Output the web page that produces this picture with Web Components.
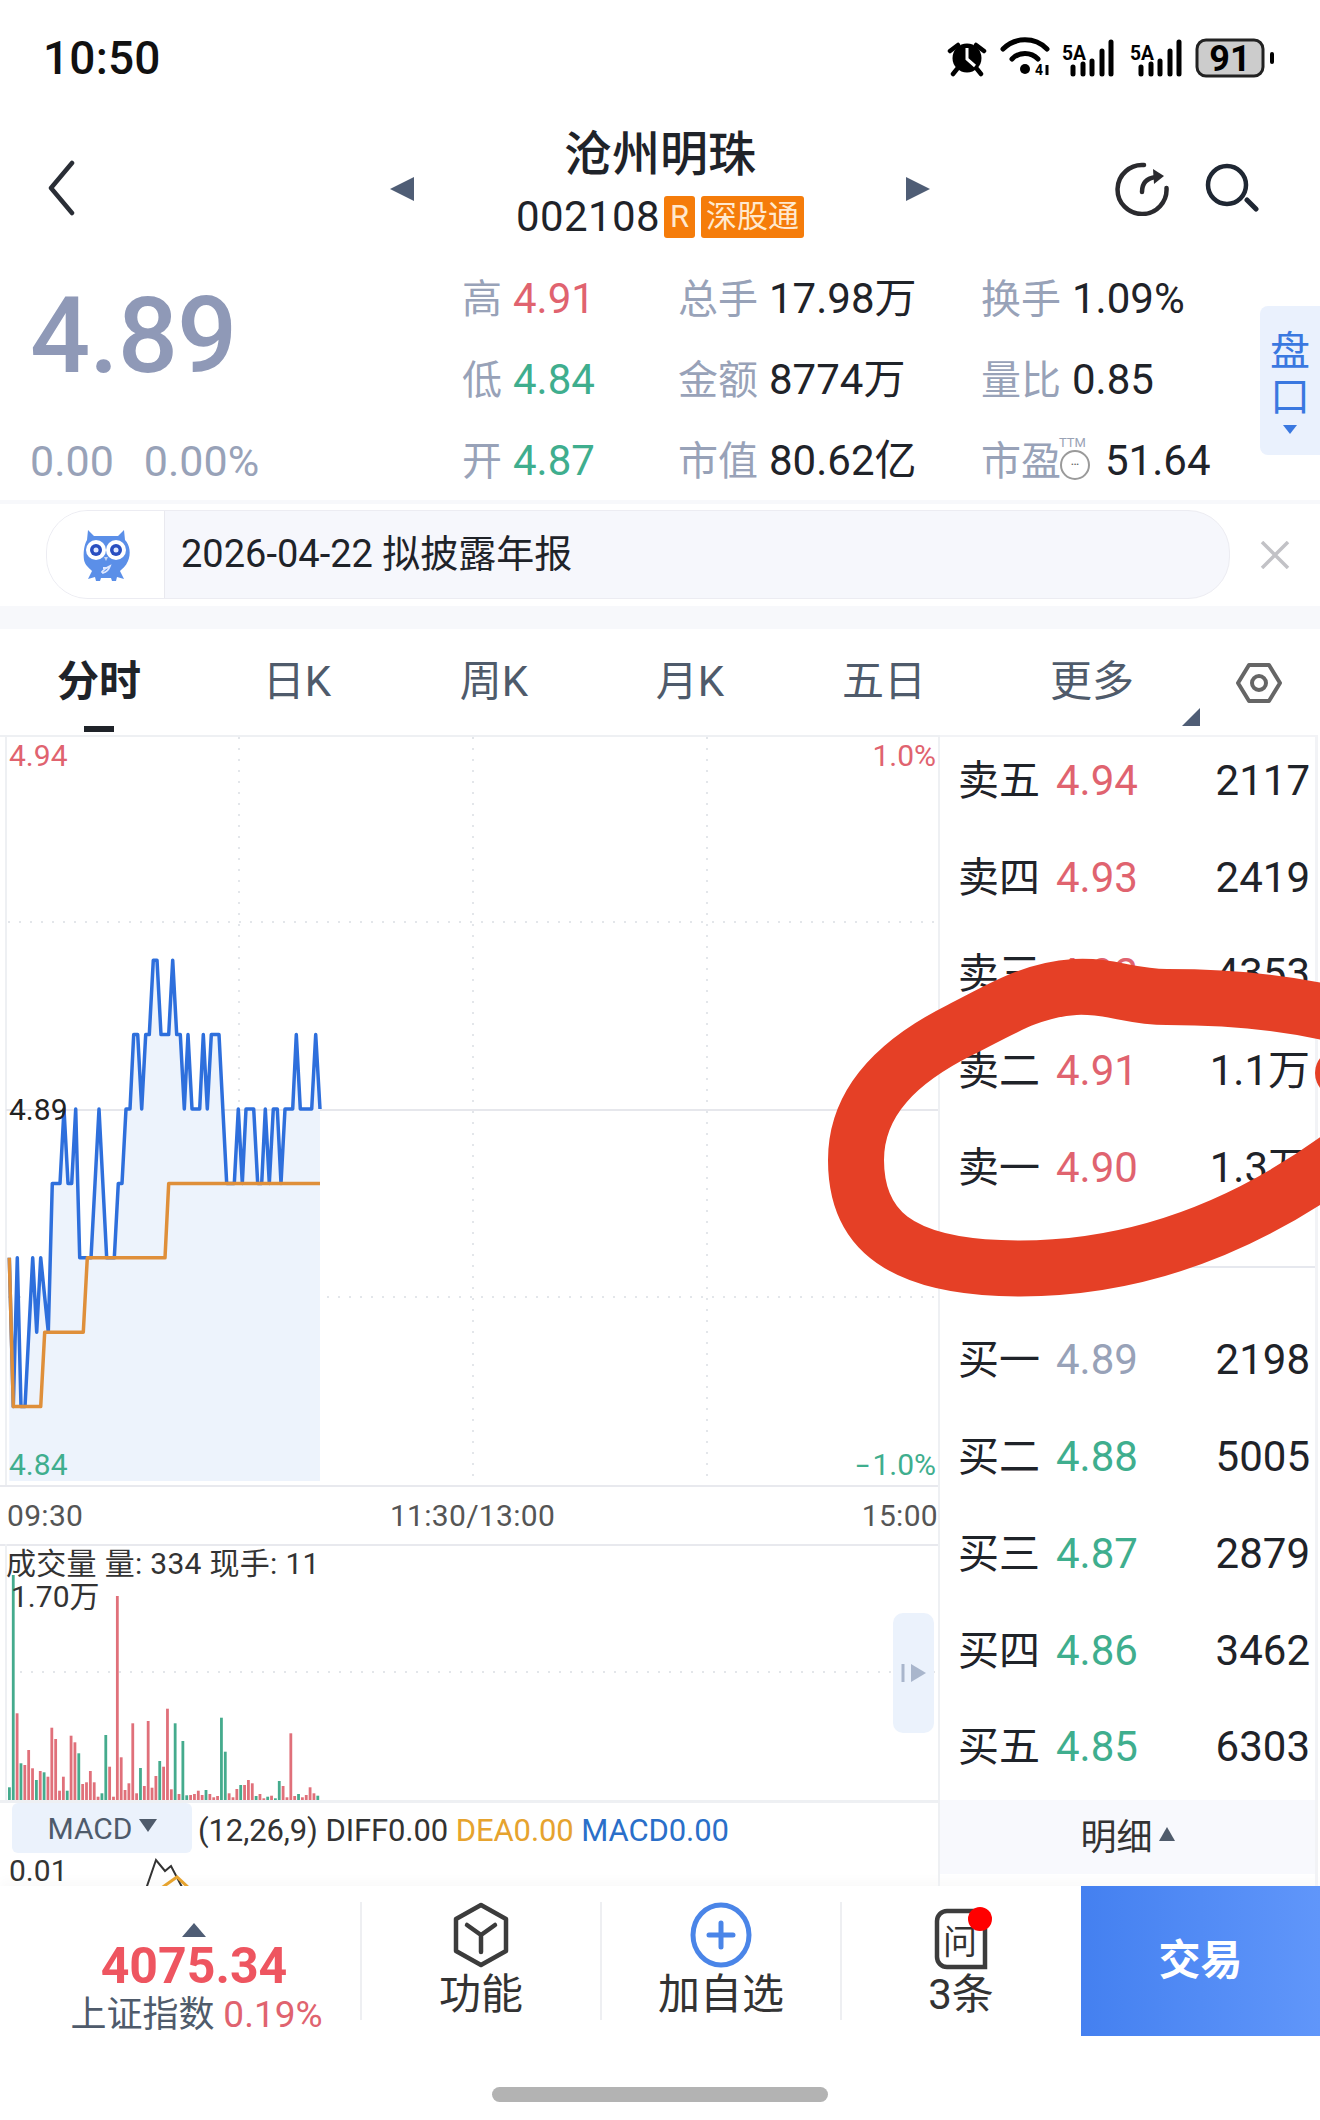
<!DOCTYPE html>
<html lang="zh">
<head>
<meta charset="utf-8">
<title>沧州明珠</title>
<style>
  html, body { margin: 0; padding: 0; background: #fff; }
  body {
    position: relative;
    width: 1320px;
    height: 2120px;
    overflow: hidden;
    color: #1f2329;
    font-family: Roboto, "Noto Sans CJK SC", sans-serif;
  }
  .band { display: block; background: #f7f8fb; }
  .trading { display: grid; grid-template-columns: 940px 380px; height: 1151px; }
</style>
</head>
<body>
<status-bar></status-bar>
<stock-header name="沧州明珠" code="002108"></stock-header>
<quote-panel price="4.89" change="0.00" percent="0.00%"></quote-panel>
<div class="band" style="height:4px"></div>
<notice-bar>2026-04-22 拟披露年报</notice-bar>
<div class="band" style="height:23px"></div>
<period-tabs></period-tabs>
<div class="trading">
  <market-chart></market-chart>
  <order-book></order-book>
</div>
<bottom-nav></bottom-nav>
<red-scribble></red-scribble>

<script>
// small base: every element clones its own template into an open shadow root
class Shell extends HTMLElement {
  constructor() {
    super();
    this.attachShadow({ mode: 'open' });
    const t = document.createElement('template');
    t.innerHTML = this.constructor.markup;
    this.shadowRoot.appendChild(t.content.cloneNode(true));
  }
  $(sel) { return this.shadowRoot.querySelector(sel); }
}

const signal = (x) => `
  <g transform="translate(${x} 0)">
    <text x="-1" y="21" font-size="21" font-weight="700" textLength="24" lengthAdjust="spacingAndGlyphs" font-family="Roboto, sans-serif">5A</text>
    <path d="M10 28v7M20 25v10M29 22v13M39 12v23M48 3v32" stroke="#000" stroke-width="5" stroke-linecap="round"/>
  </g>`;

class StatusBar extends Shell {
  static markup = `
  <style>
    :host { display: flex; height: 100px; justify-content: space-between; box-sizing: border-box; padding: 34px 44px 0 43px; }
    .time { font-size: 46px; line-height: 48px; color: #111; font-weight: 500; letter-spacing: .2px; }
    svg { display: block; margin-right: -1px; margin-top: 1px; }
  </style>
  <div class="time">10:50</div>
  <svg width="330" height="44" viewBox="0 0 330 44">
    <g transform="translate(-945 -36)">
      <circle cx="965" cy="59" r="14.5" fill="#000"/>
      <path d="M965 49v11l8 7" stroke="#fff" stroke-width="3" fill="none"/>
      <path d="M948 52l8-6M982 52l-8-6M955 70l-4 5M975 70l4 5" stroke="#000" stroke-width="4.5" stroke-linecap="round"/>
      <circle cx="1023" cy="70" r="5" fill="#000"/>
      <path d="M1001 50a31 31 0 0 1 44 0M1010 60a18 18 0 0 1 26 0" stroke="#000" stroke-width="5" fill="none" stroke-linecap="round"/>
      <text x="1033" y="76" font-size="14" font-weight="700">4</text>
      <path d="M1045 66v10" stroke="#000" stroke-width="3"/>
    </g>
    <g transform="translate(116 4)">${signal(0)}${signal(68)}</g>
    <rect x="250" y="5" width="66" height="36" rx="9" fill="#ccc" stroke="#222" stroke-width="3"/>
    <text x="283" y="36" font-size="36" font-weight="700" text-anchor="middle" font-family="Roboto, sans-serif">91</text>
    <rect x="323" y="17" width="4" height="12" rx="2" fill="#000"/>
  </svg>`;
}

class StockHeader extends Shell {
  static markup = `
  <style>
    :host { display: grid; height: 157px; box-sizing: border-box; grid-template-columns: 390px 24px 492px 24px 390px; align-items: center; }
    .back { padding-left: 46px; height: 56px; margin-top: 18px; }
    .arrow { width: 0; height: 0; border-top: 12px solid transparent; border-bottom: 12px solid transparent; margin-top: 20px; }
    .arrow.l { border-right: 24px solid #4f5d75; }
    .arrow.r { border-left: 24px solid #4f5d75; }
    .mid { display: flex; flex-direction: column; align-items: center; margin-top: 7px; }
    h1 { margin: 0; font-size: 48px; line-height: 60px; font-weight: 500; color: #1f2329; }
    .code { display: flex; align-items: center; height: 46px; margin-top: 9px; font-size: 42px; letter-spacing: .4px; gap: 4px; }
    .tag { display: block; height: 42px; line-height: 42px; background: #f57c0a; color: #ffe9cf; font-size: 31px; border-radius: 3px; padding: 0 6px; letter-spacing: 0; }
    .tag + .tag { margin-left: 2px; padding: 0 5px; }
    .tools { display: flex; gap: 36px; grid-column: 5; justify-content: flex-end; padding-right: 61px; margin-top: 20px; }
    svg { display: block; }
  </style>
  <div class="back"><svg width="30" height="56" viewBox="0 0 30 56"><path d="M26 3L5 28l21 25" fill="none" stroke="#2a2e36" stroke-width="4.500" stroke-linecap="round" stroke-linejoin="round"/></svg></div>
  <div class="arrow l"></div>
  <div class="mid"><h1></h1><div class="code"><span id="code"></span><span class="tag">R</span><span class="tag">深股通</span></div></div>
  <div class="arrow r"></div>
  <div class="tools">
    <svg width="54" height="54" viewBox="0 0 54 54"><path d="M29 3.100A24.500 24.500 0 1 0 51.500 26" fill="none" stroke="#2a2a2e" stroke-width="4.500" stroke-linecap="round"/><path d="M27 30c0-9 5-14 14-15" fill="none" stroke="#2a2a2e" stroke-width="4.500" stroke-linecap="round"/><path d="M38 7l11 7-10 8z" fill="#2a2a2e"/></svg>
    <svg width="54" height="54" viewBox="0 0 54 54"><circle cx="22" cy="23" r="19" fill="none" stroke="#1f2733" stroke-width="4.500"/><path d="M42 38l9 9" stroke="#1f2733" stroke-width="5" stroke-linecap="round"/></svg>
  </div>`;
  connectedCallback() {
    this.$('h1').textContent = this.getAttribute('name');
    this.$('#code').textContent = this.getAttribute('code');
  }
}

class QuoteStat extends Shell {
  static markup = `
  <style>
    :host { display: flex; align-items: baseline; font-size: 40px; height: 81px; box-sizing: border-box; padding-top: 21px; white-space: nowrap; }
    .l { color: #98a2b8; margin-right: 11px; line-height: 1; }
    .v { font-size: 42px; line-height: 1; color: #1f2329; }
    :host([tone=up]) .v { color: #e0636f; }
    :host([tone=down]) .v { color: #3fae8e; }
  </style>
  <span class="l"><span id="lb"></span><slot></slot></span><span class="v"></span>`;
  connectedCallback() {
    this.$('#lb').textContent = this.getAttribute('label');
    this.$('.v').textContent = this.getAttribute('value');
  }
}

class QuotePanel extends Shell {
  static markup = `
  <style>
    :host { display: grid; height: 243px; grid-template-columns: 462px 216px 303px 279px 60px; grid-template-rows: repeat(3, 81px); }
    .price { grid-column: 1; grid-row: 1 / 3; padding-left: 30px; font-size: 106px; line-height: 158px; font-weight: 500; color: #8f99b7; letter-spacing: -1px; }
    .change { grid-column: 1; grid-row: 3; padding-left: 30px; font-size: 43px; line-height: 85px; color: #98a2b8; display: flex; gap: 30px; }
    .side { grid-column: 5; grid-row: 1 / 4; margin-top: 49px; height: 149px; background: #eaf1fd; border-radius: 8px 0 0 8px; color: #3a78e0; font-size: 40px; line-height: 46px; text-align: center; display: flex; flex-direction: column; align-items: center; padding-top: 23px; box-sizing: border-box; }
    .side i { display: block; width: 0; height: 0; margin-top: 4px; border-left: 7px solid transparent; border-right: 7px solid transparent; border-top: 9px solid #3a78e0; }
    .ttm { position: relative; display: inline-block; vertical-align: 8px; width: 30px; height: 30px; box-sizing: border-box; border: 2px solid #9a9a9a; border-radius: 50%; margin: 0 4px 0 -1px; color: #666; font-size: 8px; line-height: 26px; text-align: center; letter-spacing: 0; }
    .ttm b { position: absolute; top: -16px; left: -3px; font-size: 13px; line-height: 14px; font-weight: 400; color: #9aa3b5; }
  </style>
  <div class="price"></div>
  <div class="change"><span id="c"></span><span id="p"></span></div>
  <quote-stat style="grid-column:2;grid-row:1" label="高" value="4.91" tone="up"></quote-stat>
  <quote-stat style="grid-column:3;grid-row:1" label="总手" value="17.98万"></quote-stat>
  <quote-stat style="grid-column:4;grid-row:1" label="换手" value="1.09%"></quote-stat>
  <quote-stat style="grid-column:2;grid-row:2" label="低" value="4.84" tone="down"></quote-stat>
  <quote-stat style="grid-column:3;grid-row:2" label="金额" value="8774万"></quote-stat>
  <quote-stat style="grid-column:4;grid-row:2" label="量比" value="0.85"></quote-stat>
  <quote-stat style="grid-column:2;grid-row:3" label="开" value="4.87" tone="down"></quote-stat>
  <quote-stat style="grid-column:3;grid-row:3" label="市值" value="80.62亿"></quote-stat>
  <quote-stat style="grid-column:4;grid-row:3" label="市盈" value="51.64"><span class="ttm"><b>TTM</b>•••</span></quote-stat>
  <div class="side">盘<br>口<i></i></div>`;
  connectedCallback() {
    this.$('.price').textContent = this.getAttribute('price');
    this.$('#c').textContent = this.getAttribute('change');
    this.$('#p').textContent = this.getAttribute('percent');
  }
}

class NoticeBar extends Shell {
  static markup = `
  <style>
    :host { display: flex; align-items: center; height: 102px; box-sizing: border-box; padding: 6px 30px 7px 46px; gap: 30px; }
    .box { flex: 1; display: flex; height: 89px; box-sizing: border-box; border: 1px solid #ececf2; border-radius: 42px; overflow: hidden; background: #f6f7fc; }
    .owl { width: 118px; background: #fff; border-right: 1px solid #e9e9ef; display: flex; align-items: center; justify-content: center; padding-top: 3px; box-sizing: border-box; }
    .txt { padding-left: 16px; font-size: 38px; line-height: 87px; color: #1f2329; white-space: nowrap; }
    svg { display: block; }
  </style>
  <div class="box">
    <div class="owl">
      <svg width="56" height="60" viewBox="0 0 56 60">
        <path d="M10 4l6 6h24l6-6 1 10c5 5 6 14 3 21-2 5-6 8-8 10l4 8-7-2-1 4h-4l-1-3h-10l-1 3h-4l-1-4-7 2 4-8c-3-3-7-6-8-11C5 27 6 19 9 14z" fill="#5b8fe8"/>
        <circle cx="18" cy="24" r="10" fill="#fff"/><circle cx="38" cy="24" r="10" fill="#fff"/>
        <circle cx="18" cy="24" r="6" fill="#2a4fc0"/><circle cx="38" cy="24" r="6" fill="#2a4fc0"/>
        <circle cx="18" cy="24" r="2.500" fill="#dfe8ff"/><circle cx="38" cy="24" r="2.500" fill="#dfe8ff"/>
        <path d="M26 31l2 4 2-4z" fill="#c9d6f2"/>
        <path d="M24 46c2-3 6-5 8-6-1 3-3 6-7 7zM25 42h4" fill="none" stroke="#dfe8ff" stroke-width="1.800"/>
      </svg>
    </div>
    <div class="txt"><slot></slot></div>
  </div>
  <svg width="30" height="28" viewBox="0 0 30 28"><path d="M2 1l26 26M28 1L2 27" stroke="#c2c2c6" stroke-width="3.500"/></svg>`;
}

class PeriodTabs extends Shell {
  static markup = `
  <style>
    :host { display: grid; position: relative; height: 106px; grid-template-columns: 198px 198px 196px 196px 192px 224px 116px; align-items: center; font-size: 42px; color: #4f5b6b; text-align: center; }
    span { display: block; margin-top: -10px; }
    .on { color: #1f2329; font-weight: 700; position: relative; }
    .on::after { content: ""; position: absolute; left: 84px; top: 79px; width: 30px; height: 6px; background: #1f2329; }
    .corner { position: absolute; left: 1182px; top: 79px; width: 18px; height: 18px; background: #4f5d75; clip-path: polygon(100% 0, 100% 100%, 0 100%); }
    svg { display: block; margin: 2px auto 0; transform: translateX(-3px); }
  </style>
  <span class="on">分时</span><span>日K</span><span>周K</span><span>月K</span><span>五日</span><span>更多</span>
  <svg width="46" height="40" viewBox="0 0 46 40"><path d="M13 2h20l11 18-11 18H13L2 20z" fill="none" stroke="#666" stroke-width="4" stroke-linejoin="round"/><circle cx="23" cy="20" r="7" fill="none" stroke="#666" stroke-width="4"/></svg>
  <i class="corner"></i>`;
}

// blue price series read off the chart: [x in 1/3 px, price in cents over 4.84]
const PRICE = [[28,3],[40,1],[52,3],[63,1],[75,1],[98,3],[110,2],[122,3],[145,2],[157,4],[180,4],[192,5],[204,4],[215,4],[227,5],[239,3],[273,3],[297,5],[320,3],[343,3],[355,4],[366,4],[378,5],[390,5],[401,6],[413,6],[425,5],[437,6],[448,6],[460,7],[471,7],[483,6],[506,6],[518,7],[530,6],[541,6],[553,5],[564,6],[576,5],[599,5],[610,6],[622,5],[634,6],[657,6],[680,4],[703,4],[715,5],[727,4],[738,5],[761,5],[773,4],[785,4],[796,5],[808,4],[820,5],[832,5],[843,4],[855,5],[878,5],[889,6],[901,5],[935,5],[947,6],[960,5]];
const AVG = [[28,3],[40,1],[122,1],[134,2],[250,2],[262,3],[495,3],[506,4],[960,4]];
// volume bars: [colour, top in 1/3 px over the 780 base]
const VOL = 'g742 g105 r520 g670 r675 r630 r685 g720 r693 g697 r710 r563 r597 r752 r710 g752 r587 r607 g640 r732 r727 r693 r727 r770 g760 g585 r680 r770 r168 r652 r750 r730 r550 r760 g684 r738 r543 r743 r708 g663 r680 r506 r748 g550 r762 g603 g766 r765 r762 r752 r765 g750 r762 r772 r768 g533 g635 r760 r772 r747 g735 r735 r720 r730 g768 r762 r775 g770 r767 g775 g723 r738 r772 r580 r768 g762 r772 r765 r742 r760 g767'.split(' ');

const py = (c) => (746 - 74.4 * c).toFixed(1);
const path = (rows) => rows.map(([x, c], i) => (i ? 'L' : 'M') + (x / 3).toFixed(1) + ' ' + py(c)).join('');

class MarketChart extends Shell {
  static markup = `
  <style>
    :host { display: block; position: relative; box-sizing: border-box; height: 1151px; border-right: 2px solid #eef0f3; font-size: 30px; color: #333; }
    svg { display: block; }
    .plot { position: relative; height: 750px; border-top: 2px solid #eef0f3; box-sizing: border-box; }
    .plot svg { position: absolute; left: 0; top: -2px; }
    .lb { position: absolute; line-height: 34px; }
    .up { color: #e0636f; } .dn { color: #3fae8e; }
    .dash { display: inline-block; width: 16px; transform: scaleX(1.6); transform-origin: left; }
    .axis { display: flex; justify-content: space-between; align-items: center; height: 59px; box-sizing: border-box; padding: 0 0 0 7px; font-size: 30px; letter-spacing: .3px; color: #555; border-top: 2px solid #e8e9ee; }
    .vol { position: relative; height: 256px; border-top: 2px solid #e8e9ee; box-sizing: border-box; }
    .vol svg { position: absolute; left: 0; top: -2px; }
    .vh { position: absolute; left: 6px; top: 0px; line-height: 36px; white-space: nowrap; letter-spacing: .3px; }
    .vm { position: absolute; left: 11px; top: 33px; line-height: 36px; }
    .pull { position: absolute; left: 893px; top: 67px; width: 41px; height: 120px; background: #ebf2fc; border-radius: 10px; display: flex; align-items: center; justify-content: center; }
    .pull svg { position: static; }
    .macd { position: relative; height: 86px; border-top: 3px solid #eef0f3; box-sizing: border-box; }
    .macd .sliver { position: absolute; left: 0; top: 0; }
    .row { display: flex; align-items: center; height: 50px; padding-left: 12px; }
    .pill { width: 180px; height: 50px; background: #ebf2fc; border-radius: 6px; color: #4f5b6b; display: flex; align-items: center; justify-content: center; gap: 6px; margin-right: 6px; }
    .pill i { width: 0; height: 0; border-left: 9px solid transparent; border-right: 9px solid transparent; border-top: 13px solid #4f5b6b; margin-top: -6px; }
    .params { white-space: nowrap; margin-top: 4px; font-size: 31px; letter-spacing: -.1px; }
    .dea { color: #e6a32e; } .mac { color: #2a6fc9; }
    .low { padding-left: 9px; line-height: 28px; margin-top: 4px; }
  </style>
  <div class="plot">
    <svg id="main" width="938" height="750" viewBox="0 0 938 750"></svg>
    <span class="lb up" style="left:9px;top:2px">4.94</span>
    <span class="lb up" style="right:2px;top:2px">1.0%</span>
    <span class="lb" style="left:9px;top:356px;color:#222">4.89</span>
    <span class="lb dn" style="left:9px;top:711px">4.84</span>
    <span class="lb dn" style="right:2px;top:711px"><span class="dash">-</span>1.0%</span>
  </div>
  <div class="axis"><span>09:30</span><span>11:30/13:00</span><span>15:00</span></div>
  <div class="vol">
    <svg id="bars" width="938" height="256" viewBox="0 0 938 256"></svg>
    <span class="vh">成交量 量: 334 现手: 11</span>
    <span class="vm">1.70万</span>
    <div class="pull"><svg width="26" height="22" viewBox="0 0 26 22"><path d="M2 2v18" stroke="#a9b6cc" stroke-width="3"/><path d="M10 2l15 9-15 9z" fill="#a9b6cc"/></svg></div>
  </div>
  <div class="macd">
    <svg class="sliver" width="300" height="83" viewBox="0 0 300 83"><path d="M146 86l10-29 9 11 6-5 12 23" fill="none" stroke="#333" stroke-width="2"/><path d="M160 86l17-12 13 12" fill="none" stroke="#e6a32e" stroke-width="3"/></svg>
    <div class="row"><div class="pill">MACD<i></i></div><span class="params">(12,26,9) DIFF0.00 <span class="dea">DEA0.00</span> <span class="mac">MACD0.00</span></span></div>
    <div class="low">0.01</div>
  </div>`;
  connectedCallback() {
    const top = 1, area = path(PRICE) + 'L320 746L9.300 746Z';
    let grid = '';
    for (const x of [239, 473, 707]) grid += `<path d="M${x} 2V746" stroke="#e3e6ea" stroke-width="2" stroke-dasharray="2 9"/>`;
    for (const y of [187, 562]) grid += `<path d="M8 ${y}H936" stroke="#e3e6ea" stroke-width="2" stroke-dasharray="2 9"/>`;
    grid += `<path d="M6 ${top}V750" stroke="#eef0f3" stroke-width="2"/><path d="M6 375H938" stroke="#e6e7ec" stroke-width="2"/>`;
    this.$('#main').innerHTML = grid +
      `<path d="${area}" fill="#edf3fc"/>` +
      `<path d="${path(PRICE)}" fill="none" stroke="#2e6fdc" stroke-width="3.500" stroke-linejoin="round"/>` +
      `<path d="${path(AVG)}" fill="none" stroke="#df8f3a" stroke-width="3.500" stroke-linejoin="round"/>`;
    let bars = `<path d="M20 128H936" stroke="#e3e6ea" stroke-width="2" stroke-dasharray="2 9"/><path d="M6 0V256" stroke="#eef0f3" stroke-width="2"/>`;
    VOL.forEach((v, i) => {
      const y = (+v.slice(1)) / 3 - 4;
      const x = 8 + i * 3.855;
      bars += `<rect x="${x.toFixed(2)}" y="${y.toFixed(1)}" width="2.800" height="${(256 - y).toFixed(1)}" fill="${v[0] === 'g' ? '#45ab8d' : '#e0707a'}"/>`;
    });
    this.$('#bars').innerHTML = bars;
  }
}

class BookRow extends Shell {
  static markup = `
  <style>
    :host { display: flex; align-items: baseline; height: 96.7px; box-sizing: border-box; padding: 23px 5px 0 18px; font-size: 41px; white-space: nowrap; }
    .n { width: 98px; color: #1f2329; line-height: 1; }
    .p { font-size: 42px; line-height: 1; }
    :host([tone=up]) .p { color: #e0636f; }
    :host([tone=down]) .p { color: #3fae8e; }
    :host([tone=flat]) .p { color: #98a2b8; }
    .q { margin-left: auto; color: #1f2329; font-size: 42px; line-height: 1; }
  </style>
  <span class="n"></span><span class="p"></span><span class="q"></span>`;
  connectedCallback() {
    this.$('.n').textContent = this.getAttribute('name');
    this.$('.p').textContent = this.getAttribute('price');
    this.$('.q').textContent = this.getAttribute('qty');
  }
}

class OrderBook extends Shell {
  static markup = `
  <style>
    :host { display: block; height: 1151px; box-sizing: border-box; border-right: 3px solid #f2f3f6; border-top: 2px solid #f2f3f6; margin-right: 2px; }
    .gap { height: 96px; display: flex; align-items: center; }
    .gap::after { content: ""; flex: 1; height: 2px; background: #e6e8ee; margin: -2px 0 0 0; }
    .more { height: 74px; background: #f8f9fd; font-size: 36px; color: #333; display: flex; align-items: center; justify-content: center; gap: 6px; padding-bottom: 6px; box-sizing: border-box; }
    .more i { width: 0; height: 0; border-left: 8px solid transparent; border-right: 8px solid transparent; border-bottom: 14px solid #4f5b6b; }
  </style>
  <book-row name="卖五" price="4.94" qty="2117" tone="up"></book-row>
  <book-row name="卖四" price="4.93" qty="2419" tone="up"></book-row>
  <book-row name="卖三" price="4.92" qty="4353" tone="up"></book-row>
  <book-row name="卖二" price="4.91" qty="1.1万" tone="up"></book-row>
  <book-row name="卖一" price="4.90" qty="1.3万" tone="up"></book-row>
  <div class="gap"></div>
  <book-row name="买一" price="4.89" qty="2198" tone="flat"></book-row>
  <book-row name="买二" price="4.88" qty="5005" tone="down"></book-row>
  <book-row name="买三" price="4.87" qty="2879" tone="down"></book-row>
  <book-row name="买四" price="4.86" qty="3462" tone="down"></book-row>
  <book-row name="买五" price="4.85" qty="6303" tone="down"></book-row>
  <div class="more">明细<i></i></div>`;
}

class NavItem extends Shell {
  static markup = `
  <style>
    :host { display: flex; flex-direction: column; align-items: center; width: 240px; height: 118px; box-sizing: border-box; padding-top: 1px; border-left: 2px solid #eeeff2; font-size: 42px; color: #333; }
    ::slotted(svg) { display: block; overflow: visible; }
    .ic { height: 64px; }
    .t { line-height: 44px; margin-top: 6px; }
  </style>
  <div class="ic"><slot></slot></div><div class="t"></div>`;
  connectedCallback() { this.$('.t').textContent = this.getAttribute('label'); }
}

class BottomNav extends Shell {
  static markup = `
  <style>
    :host { display: block; height: 234px; background: #fff; box-shadow: 0 -6px 10px rgba(0,0,0,.025); }
    .row { display: flex; height: 150px; }
    .index { width: 360px; box-sizing: border-box; padding: 37px 0 0 28px; display: flex; flex-direction: column; align-items: center; }
    .index i { width: 0; height: 0; border-left: 12px solid transparent; border-right: 12px solid transparent; border-bottom: 14px solid #4f5d75; }
    .val { font-size: 50px; line-height: 46px; font-weight: 700; color: #ee5560; margin-top: 6px; }
    .sub { font-size: 36px; line-height: 44px; color: #4f5b6b; white-space: nowrap; margin-top: 4px; margin-left: 5px; }
    .sub b { font-weight: 400; color: #e0636f; font-size: 37px; }
    nav-item { margin-top: 16px; }
    .trade { margin-left: auto; width: 239px; background: linear-gradient(90deg, #4480f0, #6096fa); color: #fff; font-size: 42px; font-weight: 700; display: flex; align-items: center; justify-content: center; padding-bottom: 9px; box-sizing: border-box; }
    .home { width: 336px; height: 15px; border-radius: 8px; background: #b3b3b3; margin: 51px auto 0; }
  </style>
  <div class="row">
    <div class="index"><i></i><div class="val">4075.34</div><div class="sub">上证指数 <b>0.19%</b></div></div>
    <nav-item label="功能"><svg width="58" height="64" viewBox="0 0 58 64"><path d="M29 2l25 14v32L29 62 4 48V16z" fill="none" stroke="#3c3c3c" stroke-width="4.500" stroke-linejoin="round"/><path d="M15 22l14 10 14-10M29 32v17" fill="none" stroke="#3c3c3c" stroke-width="4.500" stroke-linecap="round" stroke-linejoin="round"/></svg></nav-item>
    <nav-item label="加自选"><svg width="64" height="64" viewBox="0 0 64 64"><ellipse cx="32" cy="32" rx="28" ry="30" fill="none" stroke="#4a85e8" stroke-width="5"/><path d="M32 20v24M20 32h24" stroke="#4a85e8" stroke-width="5" stroke-linecap="round"/></svg></nav-item>
    <nav-item label="3条"><svg width="64" height="64" viewBox="-1 -3 64 64"><path d="M49 5H17a10 10 0 0 0-10 10v36a10 10 0 0 0 10 10h38V11" fill="none" stroke="#3c3c3c" stroke-width="4.500"/><text x="30" y="48" font-size="34" text-anchor="middle" fill="#333" font-family="'Noto Sans CJK SC', sans-serif">问</text><circle cx="50" cy="13" r="12" fill="#f00"/></svg></nav-item>
    <div class="trade">交易</div>
  </div>
  <div class="home"></div>`;
}

class RedScribble extends Shell {
  static markup = `
  <style>
    :host { position: absolute; left: 0; top: 0; width: 1320px; height: 2120px; pointer-events: none; }
    svg { display: block; }
  </style>
  <svg width="1320" height="2120" viewBox="0 0 1320 2120">
    <path d="M1350 1018C1290 1002 1230 997 1167 997C1130 997 1110 985 1075 987C1030 990 1000 1010 960 1030C900 1060 856 1100 856 1160C856 1230 900 1264 1000 1268C1100 1272 1220 1248 1350 1150" fill="none" stroke="#e54026" stroke-width="56" stroke-linecap="round"/>
    <circle cx="1339" cy="1073" r="24" fill="#e54026"/>
  </svg>`;
}

customElements.define('status-bar', StatusBar);
customElements.define('stock-header', StockHeader);
customElements.define('quote-stat', QuoteStat);
customElements.define('quote-panel', QuotePanel);
customElements.define('notice-bar', NoticeBar);
customElements.define('period-tabs', PeriodTabs);
customElements.define('market-chart', MarketChart);
customElements.define('book-row', BookRow);
customElements.define('order-book', OrderBook);
customElements.define('nav-item', NavItem);
customElements.define('bottom-nav', BottomNav);
customElements.define('red-scribble', RedScribble);
</script>
</body>
</html>
